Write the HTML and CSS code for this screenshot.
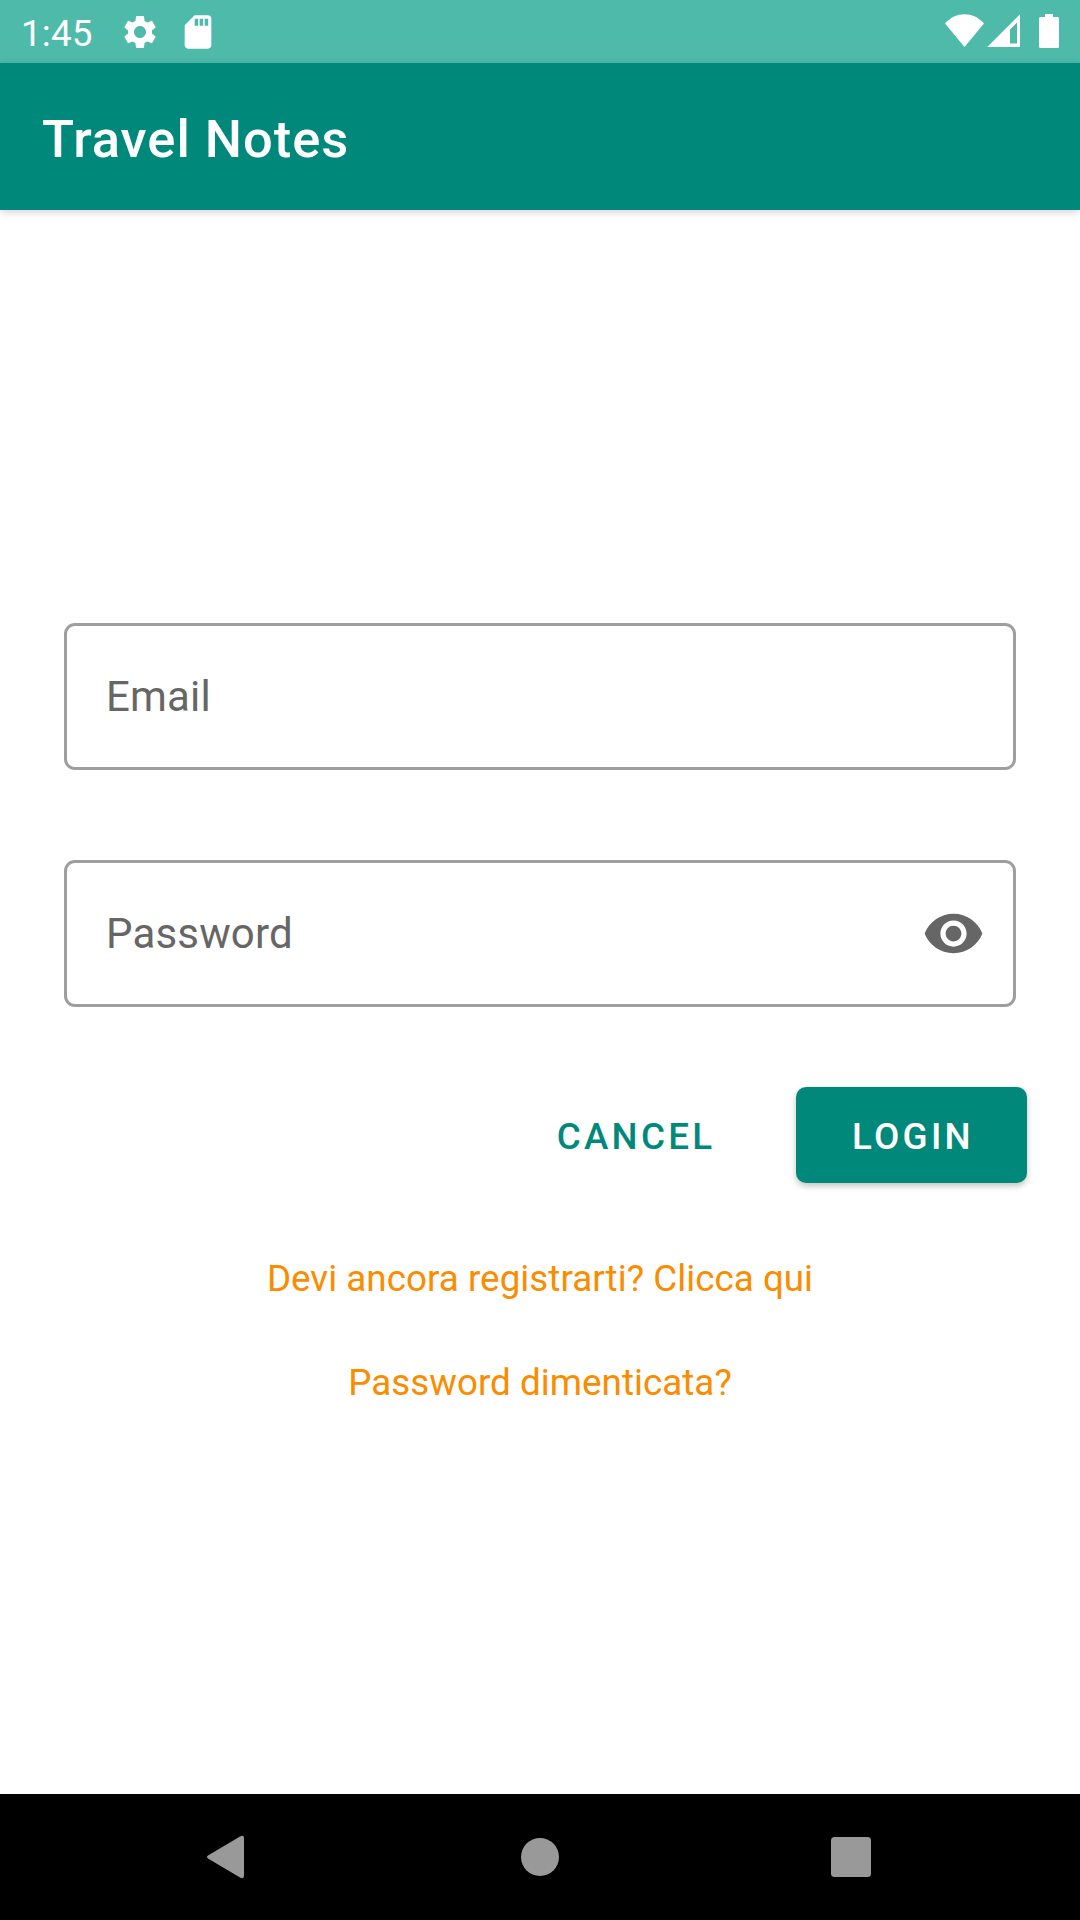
FILE: index.html
```html
<!DOCTYPE html>
<html lang="it">
<head>
<meta charset="utf-8">
<title>Travel Notes</title>
<link rel="stylesheet" href="styles.css">
</head>
<body>
<div class="status-bar">
  <span class="clock">1:45</span>
  <svg class="status-icon" viewBox="0 0 24 24"><path d="M19.14 12.94c.04-.3.06-.61.06-.94 0-.32-.02-.64-.07-.94l2.03-1.58c.18-.14.23-.41.12-.61l-1.92-3.32c-.12-.22-.37-.29-.59-.22l-2.39.96c-.5-.38-1.03-.7-1.62-.94l-.36-2.54c-.04-.24-.24-.41-.48-.41h-3.84c-.24 0-.43.17-.47.41l-.36 2.54c-.59.24-1.13.57-1.62.94l-2.39-.96c-.22-.08-.47 0-.59.22L2.74 8.87c-.12.21-.08.47.12.61l2.03 1.58c-.05.3-.09.63-.09.94s.02.64.07.94l-2.03 1.58c-.18.14-.23.41-.12.61l1.92 3.32c.12.22.37.29.59.22l2.39-.96c.5.38 1.03.7 1.62.94l.36 2.54c.05.24.24.41.48.41h3.84c.24 0 .44-.17.47-.41l.36-2.54c.59-.24 1.13-.56 1.62-.94l2.39.96c.22.08.47 0 .59-.22l1.92-3.32c.12-.22.07-.47-.12-.61zM12 15.6c-1.98 0-3.6-1.62-3.6-3.6s1.62-3.6 3.6-3.6 3.6 1.62 3.6 3.6-1.62 3.6-3.6 3.6z"/></svg>
  <svg class="status-icon sd" viewBox="0 0 24 24"><path fill-rule="evenodd" d="M18 2h-8L4.02 8 4 20c0 1.100.9 2 2 2h12c1.100 0 2-.9 2-2V4c0-1.100-.9-2-2-2zM10 4h2.100v4.300H10zM13 4h2.100v4.300H13zM16 4h2.100v4.300H16z"/></svg>
  <svg class="signals" viewBox="940 0 125 63">
    <path d="M945 23.500C956 11.300 973 11.300 984 23.500L964.500 47z"/>
    <path fill-rule="evenodd" d="M1020 14.300V47H987.300zM1017 22.500L1010 29.500V43.500H1017z"/>
    <path d="M1045 14h8v3h4.500q1.500 0 1.500 1.500v28q0 1.500-1.500 1.500h-17q-1.500 0-1.500-1.500v-28q0-1.500 1.500-1.500h4.500z"/>
  </svg>
</div>
<header class="app-bar"><h1 class="title">Travel Notes</h1></header>
<main class="content">
  <div class="field"><span class="label">Email</span></div>
  <div class="field">
    <span class="label">Password</span>
    <svg class="eye" viewBox="0 0 24 24"><path d="M12 4.500C7 4.500 2.730 7.610 1 12c1.730 4.390 6 7.500 11 7.500s9.270-3.110 11-7.500c-1.730-4.390-6-7.500-11-7.500zM12 17c-2.760 0-5-2.240-5-5s2.240-5 5-5 5 2.240 5 5-2.240 5-5 5zm0-8c-1.660 0-3 1.340-3 3s1.340 3 3 3 3-1.340 3-3-1.340-3-3-3z"/></svg>
  </div>
  <div class="actions">
    <button class="button text-button">CANCEL</button>
    <button class="button filled-button">LOGIN</button>
  </div>
  <div class="links">
    <a class="link">Devi ancora registrarti? Clicca qui</a>
    <a class="link">Password dimenticata?</a>
  </div>
</main>
<nav class="nav-bar">
  <svg class="nav-icon" viewBox="0 0 48 48"><path d="M6 22.500L38 3.400Q42 1.800 42 5V43Q42 46.200 38 44.600L6 25.500Q4 24 6 22.500z"/></svg>
  <svg class="nav-icon home" viewBox="0 0 48 48"><circle cx="24" cy="24" r="19"/></svg>
  <svg class="nav-icon" viewBox="0 0 48 48"><rect x="4" y="4" width="40" height="40" rx="3.500"/></svg>
</nav>
</body>
</html>
```
FILE: styles.css
```css
* { box-sizing: border-box; }

body {
  margin: 0;
  width: 1080px;
  height: 1920px;
  display: flex;
  flex-direction: column;
  overflow: hidden;
  background: #fff;
  font-family: Roboto, sans-serif;
}

svg { display: block; flex: none; }

.status-bar {
  height: 63px;
  display: flex;
  align-items: center;
  padding: 0 15px 0 21px;
  background: #4ebaaa;
  color: #fff;
  fill: #fff;
}

.clock {
  width: 99px;
  padding-top: 3px;
  font-size: 36.75px;
  line-height: 43px;
  letter-spacing: 0.005em;
}

.status-icon { width: 40px; height: 40px; }
.sd { margin-left: 18px; }
.signals { width: 125px; height: 63px; margin-left: auto; }

.app-bar {
  height: 147px;
  display: flex;
  align-items: center;
  padding: 5px 42px 0;
  background: #00897b;
  box-shadow: 0 2px 8px rgba(0, 0, 0, 0.18);
}

.title {
  margin: 0;
  color: #fff;
  font-size: 52.5px;
  font-weight: 500;
  line-height: 62px;
  letter-spacing: 0.0185em;
}

.content {
  flex: 1;
  display: flex;
  flex-direction: column;
  gap: 90px;
  padding: 413px 64px 0;
}

.field {
  height: 147px;
  flex: none;
  display: flex;
  align-items: center;
  justify-content: space-between;
  padding: 0 28px 0 39px;
  border: 3px solid #9e9e9e;
  border-radius: 11px;
}

.label {
  padding-top: 1px;
  color: #666;
  font-size: 42px;
  line-height: 50px;
  letter-spacing: 0.004em;
}

.eye { width: 63px; height: 63px; fill: #666; }

.actions {
  display: flex;
  justify-content: flex-end;
  gap: 60px;
  margin: -10px -11px 0 0;
}

.button {
  height: 96px;
  padding: 3px 0 0;
  border: 0;
  border-radius: 10px;
  font: 500 36.75px/44px Roboto, sans-serif;
  letter-spacing: 0.0893em;
}

.text-button { width: 200px; background: transparent; color: #00897b; }

.filled-button {
  width: 231px;
  padding-left: 3px;
  background: #00897b;
  color: #fff;
  box-shadow: 0 3px 6px rgba(0, 0, 0, 0.24);
}

.links {
  display: flex;
  flex-direction: column;
  align-items: center;
  gap: 60px;
  margin-top: -16px;
}

.link {
  color: #fb8c00;
  font-size: 36.75px;
  line-height: 44px;
  letter-spacing: 0.0012em;
}

.nav-bar {
  height: 126px;
  flex: none;
  display: flex;
  align-items: center;
  justify-content: space-between;
  padding: 0 205px 0 202px;
  background: #000;
  fill: #999;
}

.nav-icon { width: 48px; height: 48px; }
.home { margin-left: 3px; }
```
